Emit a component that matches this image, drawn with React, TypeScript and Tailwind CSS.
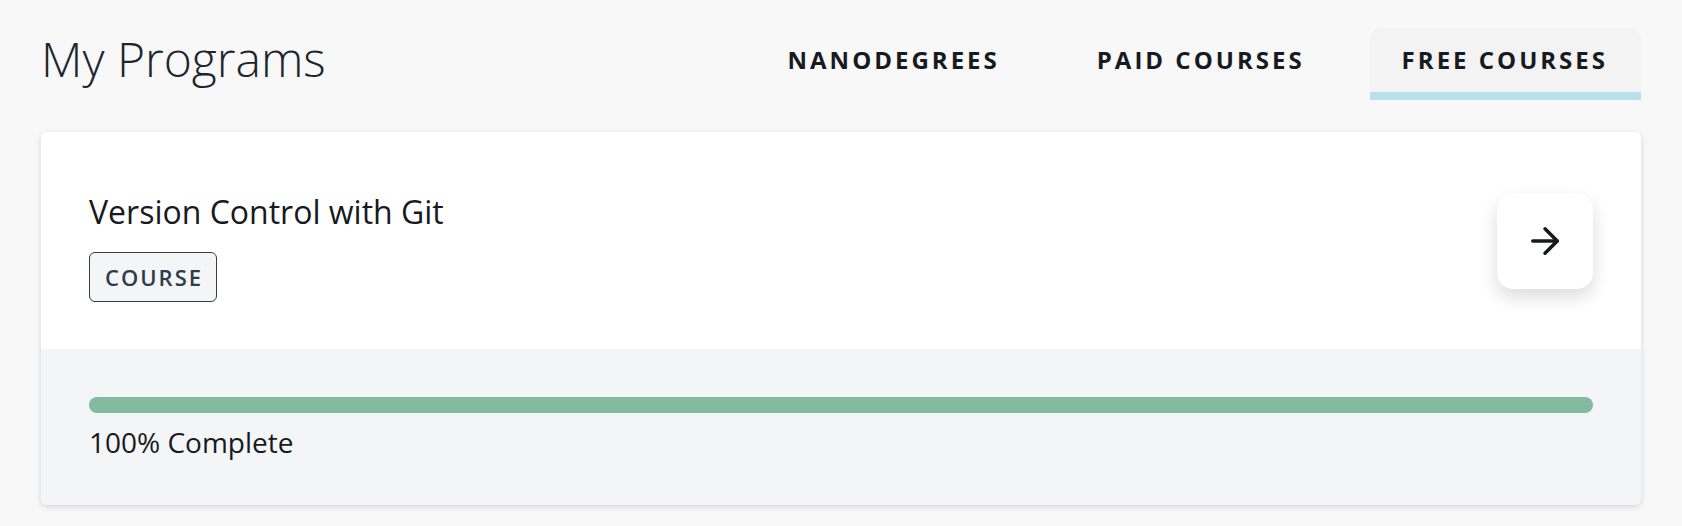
import { ArrowRight } from "lucide-react";

const tabs = [
  { label: "NANODEGREES", active: false },
  { label: "PAID COURSES", active: false },
  { label: "FREE COURSES", active: true },
];

function ProgramCard() {
  return (
    <div className="mt-8 overflow-hidden rounded-md bg-white shadow-[0_2px_6px_rgba(0,0,0,0.14)]">
      <div className="flex h-[217px] items-start justify-between px-12 pt-[61px]">
        <div className="pt-px">
          <h2 className="text-[32px] leading-9 text-[#171a1f]">Version Control with Git</h2>
          <span className="mt-[22px] inline-flex h-[50px] items-center rounded-md border border-[#2e3d49] bg-[#f4f5f7] pl-[15px] pr-[13px] text-[22px] font-semibold tracking-[2px] text-[#2e3d49]">
            COURSE
          </span>
        </div>
        <button className="flex h-24 w-24 items-center justify-center rounded-2xl bg-white shadow-[0_8px_18px_rgba(0,0,0,0.14)]">
          <ArrowRight size={42} strokeWidth={2} className="text-[#171a1f]" />
        </button>
      </div>
      <div className="h-[156px] bg-[#f4f5f7] px-12 pt-12">
        <div className="h-4 w-full rounded-full bg-[#82bb9f]" />
        <p className="mt-[11px] text-[28px] leading-9 text-[#171a1f]">100% Complete</p>
      </div>
    </div>
  );
}

export default function App() {
  return (
    <div className="min-h-screen bg-[#f8f8f8] font-['Open_Sans',sans-serif]">
      <div className="mx-auto max-w-[1600px] pt-7">
        <header className="flex items-start justify-between">
          <h1 className="mt-[7px] text-5xl font-light leading-none text-[#1c262f]">My Programs</h1>
          <nav className="flex gap-8">
            {tabs.map((tab) => (
              <button
                key={tab.label}
                className={
                  tab.active
                    ? "flex h-[72px] items-center rounded-t-xl border-b-8 border-[#b7e1ec] bg-[#f3f3f3] pl-8 pr-[33px] text-[24px] font-bold tracking-[3px] text-[#171a1f]"
                    : "flex h-[72px] items-center border-b-8 border-transparent pl-8 pr-[33px] text-[24px] font-bold tracking-[3px] text-[#171a1f]"
                }
              >
                {tab.label}
              </button>
            ))}
          </nav>
        </header>
        <ProgramCard />
      </div>
    </div>
  );
}
